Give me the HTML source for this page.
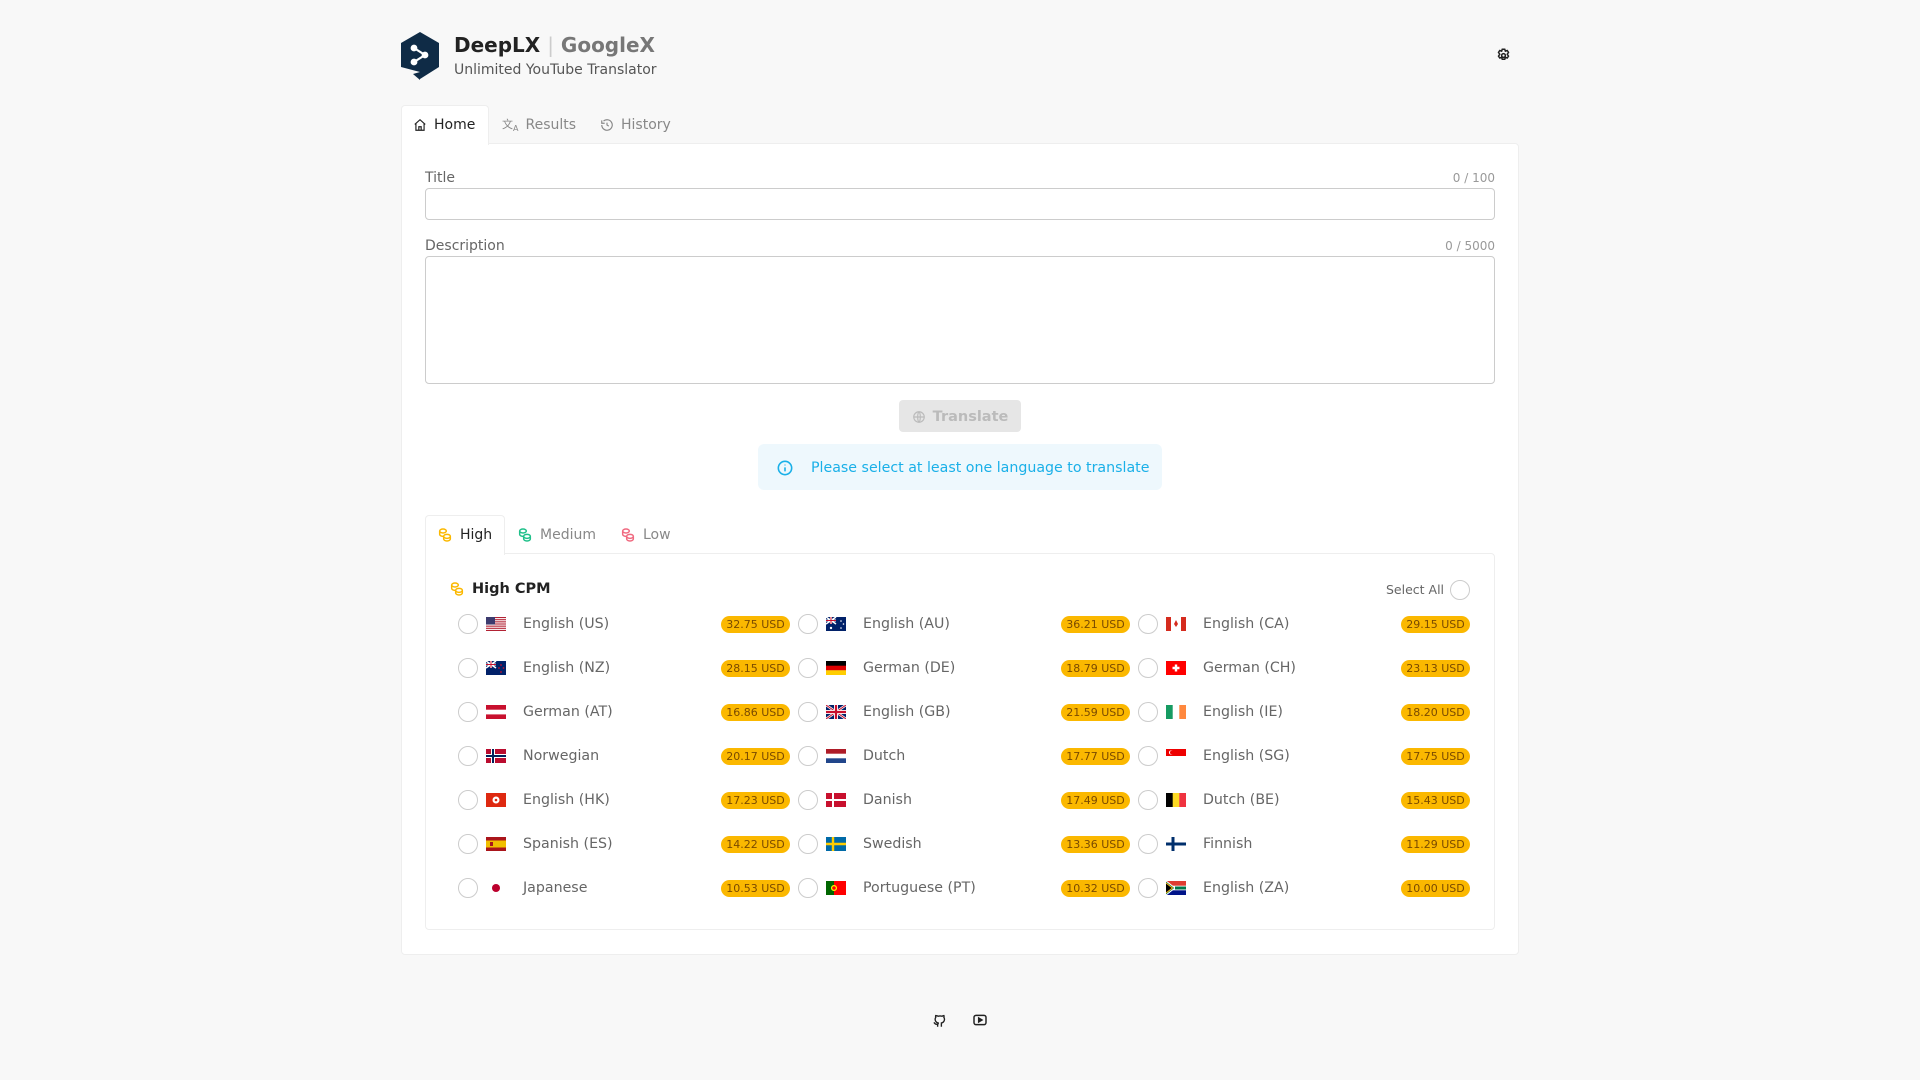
<!DOCTYPE html>
<html><head><meta charset="utf-8"><style>
*{box-sizing:border-box;margin:0;padding:0}
body{width:1920px;height:1080px;background:#f8f8f8;font-family:"DejaVu Sans","Liberation Sans",sans-serif;color:#333;position:relative;overflow:hidden}
.a{position:absolute}
.card{left:401px;top:143px;width:1118px;height:812px;background:#fff;border:1px solid #eee;border-radius:0 4px 4px 4px}
.tab{top:105px;height:39px;font-size:14px;color:#888;display:flex;align-items:center;gap:7px}
.lbl{font-size:14px;color:#666}
.cnt{font-size:12px;color:#999}
.inp{border:1px solid #ccc;border-radius:4px;background:#fff}
.cb{width:20px;height:20px;border:1px solid #ccc;border-radius:50%;background:#fff}
.lang{font-size:14.2px;color:#666}
.bd{background:#fbb800;color:#7a4a00;font-size:11px;border-radius:9px;height:17px;width:69px;text-align:center;line-height:17px}
.flag{width:20px;height:14px}
</style></head><body>
<svg width="0" height="0" style="position:absolute"><defs><g id="coin" fill="none" stroke-width="2.2"><ellipse cx="9" cy="6" rx="5" ry="3"/><path d="M4 6v5c0 1.7 2.2 3 5 3"/><ellipse cx="15" cy="14" rx="5" ry="3"/><path d="M10 14v4c0 1.7 2.2 3 5 3s5-1.3 5-3v-4"/></g></defs></svg>
<svg class="a" style="left:400px;top:32px" width="40" height="49" viewBox="0 0 40 49"><path d="M20 0 L39 11 L39 35 L20 47 L20 40 L1 35 L1 11 Z" fill="#0f2b46"/><path d="M20 40 L20 48 L13 42Z" fill="#0f2b46"/><g stroke="#fff" stroke-width="2.2" fill="#fff"><path d="M14 16 L25 23 L14 30" fill="none"/><circle cx="14" cy="16" r="2.3"/><circle cx="25" cy="23" r="2.3"/><circle cx="14" cy="30" r="2.3"/></g></svg>
<div class="a" style="left:454px;top:33px;font-size:20px;font-weight:bold;color:#222">DeepLX <span style="color:#ccc;font-weight:normal">|</span> <span style="color:#777">GoogleX</span></div>
<div class="a" style="left:454px;top:62px;font-size:14px;color:#555">Unlimited YouTube Translator</div>
<svg class="a" style="left:1496px;top:48px" width="15" height="15" viewBox="0 0 24 24" fill="none" stroke="#222" stroke-width="2.4"><path d="M10 2h4l1 3 3-1 2 3-2 3 2 3-2 3-3-1-1 3h-4l-1-3-3 1-2-3 2-3-2-3 2-3 3 1z"/><circle cx="12" cy="12" r="3"/></svg>

<div class="a" style="left:401px;top:105px;width:88px;height:40px;background:#fff;border:1px solid #eee;border-bottom:none;border-radius:4px 4px 0 0;z-index:2"></div>
<div class="a tab" style="left:413px;color:#222;z-index:3"><svg width="14" height="14" viewBox="0 0 24 24" fill="none" stroke="#222" stroke-width="2"><path d="M3 11l9-8 9 8M5 9v12h14V9M10 21v-6h4v6"/></svg>Home</div>
<div class="a tab" style="left:502px"><span style="font-size:11px">文<sub style="font-size:8px">A</sub></span>Results</div>
<div class="a tab" style="left:600px"><svg width="14" height="14" viewBox="0 0 24 24" fill="none" stroke="#888" stroke-width="2"><path d="M3 12a9 9 0 1 0 3-6.7M3 4v5h5M12 8v4l3 2"/></svg>History</div>
<div class="a card"></div>

<div class="a lbl" style="left:425px;top:170px">Title</div>
<div class="a cnt" style="left:1400px;width:95px;text-align:right;top:171px">0 / 100</div>
<div class="a inp" style="left:425px;top:188px;width:1070px;height:32px"></div>
<div class="a lbl" style="left:425px;top:238px">Description</div>
<div class="a cnt" style="left:1400px;width:95px;text-align:right;top:239px">0 / 5000</div>
<div class="a inp" style="left:425px;top:256px;width:1070px;height:128px"></div>
<div class="a" style="left:899px;top:400px;width:122px;height:32px;background:#e6e6e6;border-radius:4px;color:#bbb;font-weight:bold;font-size:14.5px;display:flex;align-items:center;justify-content:center;gap:7px;padding-top:1px"><svg width="14" height="14" viewBox="0 0 24 24" fill="none" stroke="#bbb" stroke-width="2"><circle cx="12" cy="12" r="9"/><path d="M3 12h18M12 3c3 3 3 15 0 18M12 3c-3 3-3 15 0 18"/></svg>Translate</div>
<div class="a" style="left:758px;top:444px;width:404px;height:46px;background:#eef8fd;border-radius:6px;color:#1ab0e8;font-size:14.2px;display:flex;align-items:center;gap:18px;padding-left:19px;padding-top:1px"><svg width="16" height="16" viewBox="0 0 24 24" fill="none" stroke="#1ab0e8" stroke-width="2.4"><circle cx="12" cy="12" r="10"/><path d="M12 11v6M12 7v1"/></svg>Please select at least one language to translate</div>

<div class="a" style="left:425px;top:515px;width:80px;height:40px;background:#fff;border:1px solid #eee;border-bottom:none;border-radius:4px 4px 0 0;z-index:2"></div>
<div class="a" style="left:425px;top:553px;width:1070px;height:377px;border:1px solid #eee;border-radius:0 4px 4px 4px"></div>
<div class="a tab" style="left:437px;top:515px;color:#222;z-index:3"><svg width="16" height="16" viewBox="0 0 24 24" stroke="#fbb800"><use href="#coin"/></svg>High</div>
<div class="a tab" style="left:517px;top:515px"><svg width="16" height="16" viewBox="0 0 24 24" stroke="#20c08a"><use href="#coin"/></svg>Medium</div>
<div class="a tab" style="left:620px;top:515px"><svg width="16" height="16" viewBox="0 0 24 24" stroke="#f06a80"><use href="#coin"/></svg>Low</div>
<div class="a" style="left:449px;top:581px;font-size:14.5px;font-weight:bold;color:#222;display:flex;align-items:center;gap:7px"><svg width="16" height="16" viewBox="0 0 24 24" stroke="#fbb800"><use href="#coin"/></svg>High CPM</div>
<div class="a" style="left:1386px;top:582px;font-size:12.5px;color:#666">Select All</div>
<div class="a cb" style="left:1450px;top:580px"></div>

<div id="g"></div>
<script>
const F={
us:'<rect width="20" height="14" fill="#fff"/><g fill="#b22234"><rect y="0" width="20" height="1.1"/><rect y="2.15" width="20" height="1.1"/><rect y="4.3" width="20" height="1.1"/><rect y="6.45" width="20" height="1.1"/><rect y="8.6" width="20" height="1.1"/><rect y="10.75" width="20" height="1.1"/><rect y="12.9" width="20" height="1.1"/></g><rect width="9" height="7.5" fill="#3c3b6e"/>',
au:'<rect width="20" height="14" fill="#012169"/><path d="M0 0L10 7M10 0L0 7" stroke="#fff" stroke-width="1.5"/><path d="M5 0v7M0 3.5h10" stroke="#fff" stroke-width="2"/><path d="M5 0v7M0 3.5h10" stroke="#c8102e" stroke-width="1"/><circle cx="5" cy="11" r="1.2" fill="#fff"/><circle cx="15" cy="4" r=".8" fill="#fff"/><circle cx="15" cy="11" r=".8" fill="#fff"/><circle cx="17.5" cy="7" r=".8" fill="#fff"/>',
ca:'<rect width="20" height="14" fill="#fff"/><rect width="5" height="14" fill="#d52b1e"/><rect x="15" width="5" height="14" fill="#d52b1e"/><path d="M10 3l2 4-2 3-2-3z" fill="#d52b1e"/>',
de:'<rect width="20" height="5" fill="#000"/><rect y="4.7" width="20" height="4.7" fill="#d00"/><rect y="9.3" width="20" height="4.7" fill="#ffce00"/>',
ch:'<rect width="20" height="14" fill="#f00"/><path d="M10 3.5v7M6.5 7h7" stroke="#fff" stroke-width="2.4"/>',
at:'<rect width="20" height="14" fill="#c8102e"/><rect y="4.7" width="20" height="4.7" fill="#fff"/>',
gb:'<rect width="20" height="14" fill="#012169"/><path d="M0 0L20 14M20 0L0 14" stroke="#fff" stroke-width="2.5"/><path d="M0 0L20 14M20 0L0 14" stroke="#c8102e" stroke-width="1"/><path d="M10 0v14M0 7h20" stroke="#fff" stroke-width="4"/><path d="M10 0v14M0 7h20" stroke="#c8102e" stroke-width="2.2"/>',
ie:'<rect width="20" height="14" fill="#fff"/><rect width="6.7" height="14" fill="#169b62"/><rect x="13.3" width="6.7" height="14" fill="#ff883e"/>',
no:'<rect width="20" height="14" fill="#ba0c2f"/><path d="M7 0v14M0 7h20" stroke="#fff" stroke-width="4"/><path d="M7 0v14M0 7h20" stroke="#00205b" stroke-width="2"/>',
nl:'<rect width="20" height="14" fill="#fff"/><rect width="20" height="4.7" fill="#ae1c28"/><rect y="9.3" width="20" height="4.7" fill="#21468b"/>',
sg:'<rect width="20" height="14" fill="#fff"/><rect width="20" height="7" fill="#e00"/><circle cx="5" cy="3.5" r="2" fill="#fff"/><circle cx="5.8" cy="3.5" r="1.8" fill="#e00"/>',
hk:'<rect width="20" height="14" fill="#de2910"/><circle cx="10" cy="7" r="3.5" fill="#fff"/><circle cx="10" cy="7" r="1.3" fill="#de2910"/>',
dk:'<rect width="20" height="14" fill="#c8102e"/><path d="M7 0v14M0 7h20" stroke="#fff" stroke-width="2"/>',
be:'<rect width="7" height="14" fill="#000"/><rect x="6.7" width="6.7" height="14" fill="#fdda24"/><rect x="13.3" width="6.7" height="14" fill="#ef3340"/>',
es:'<rect width="20" height="14" fill="#aa151b"/><rect y="3.5" width="20" height="7" fill="#f1bf00"/><rect x="4" y="5" width="3" height="4" fill="#aa151b"/>',
se:'<rect width="20" height="14" fill="#006aa7"/><path d="M7 0v14M0 7h20" stroke="#fecc00" stroke-width="2.4"/>',
fi:'<rect width="20" height="14" fill="#fff"/><path d="M7 0v14M0 7h20" stroke="#002f6c" stroke-width="3"/>',
jp:'<rect width="20" height="14" fill="#fff"/><circle cx="10" cy="7" r="4" fill="#bc002d"/>',
pt:'<rect width="20" height="14" fill="#f00"/><rect width="8" height="14" fill="#060"/><circle cx="8" cy="7" r="3" fill="#ff0"/><circle cx="8" cy="7" r="1.8" fill="#f00"/>',
za:'<rect width="20" height="14" fill="#fff"/><rect width="20" height="4.7" fill="#e03c31"/><rect y="9.3" width="20" height="4.7" fill="#001489"/><path d="M0 0L9 7L0 14" fill="#007749" stroke="#fff" stroke-width="1"/><path d="M0 2L6.5 7L0 12" fill="#000" stroke="#ffb612" stroke-width="1"/><path d="M9 7h11" stroke="#007749" stroke-width="3"/>',
nz:'<rect width="20" height="14" fill="#012169"/><path d="M0 0L10 7M10 0L0 7" stroke="#fff" stroke-width="1.5"/><path d="M5 0v7M0 3.5h10" stroke="#fff" stroke-width="2"/><path d="M5 0v7M0 3.5h10" stroke="#c8102e" stroke-width="1"/><circle cx="15" cy="4" r=".9" fill="#c8102e"/><circle cx="15" cy="11" r=".9" fill="#c8102e"/><circle cx="17.5" cy="7" r=".9" fill="#c8102e"/><circle cx="13" cy="7" r=".9" fill="#c8102e"/>'};
const D=[['us','English (US)','32.75'],['au','English (AU)','36.21'],['ca','English (CA)','29.15'],
['nz','English (NZ)','28.15'],['de','German (DE)','18.79'],['ch','German (CH)','23.13'],
['at','German (AT)','16.86'],['gb','English (GB)','21.59'],['ie','English (IE)','18.20'],
['no','Norwegian','20.17'],['nl','Dutch','17.77'],['sg','English (SG)','17.75'],
['hk','English (HK)','17.23'],['dk','Danish','17.49'],['be','Dutch (BE)','15.43'],
['es','Spanish (ES)','14.22'],['se','Swedish','13.36'],['fi','Finnish','11.29'],
['jp','Japanese','10.53'],['pt','Portuguese (PT)','10.32'],['za','English (ZA)','10.00']];
let h='';
D.forEach((d,i)=>{const c=i%3,r=Math.floor(i/3);const x=458+c*340,y=624+r*44;
h+=`<div class="a cb" style="left:${x}px;top:${y-10}px"></div>`+
`<svg class="a flag" style="left:${x+28}px;top:${y-7}px" viewBox="0 0 20 14">${F[d[0]]}</svg>`+
`<div class="a lang" style="left:${x+65}px;top:${y-8}px">${d[1]}</div>`+
`<div class="a bd" style="left:${x+263}px;top:${y-8}px">${d[2]} USD</div>`;});
document.getElementById('g').innerHTML=h;
</script>
<svg class="a" style="left:932px;top:1013px" width="15" height="15" viewBox="0 0 24 24" fill="none" stroke="#222" stroke-width="2.2"><path d="M9 22v-4c-4 1-5-2-6-3M15 22v-4c0-1 0-2-1-2 3 0 6-2 6-6 0-1-.3-2-1-3 .3-1 .3-2 0-3-1 0-2 .5-3 1.2a11 11 0 0 0-6 0C8 4.5 7 4 6 4c-.3 1-.3 2 0 3-.7 1-1 2-1 3 0 4 3 6 6 6-1 0-1 1-1 2"/></svg>
<svg class="a" style="left:972px;top:1012px" width="16" height="16" viewBox="0 0 24 24" fill="none" stroke="#222" stroke-width="2.2"><rect x="3" y="5" width="18" height="14" rx="3"/><path d="M10 9l5 3-5 3z" fill="#222"/></svg>
</body></html>
